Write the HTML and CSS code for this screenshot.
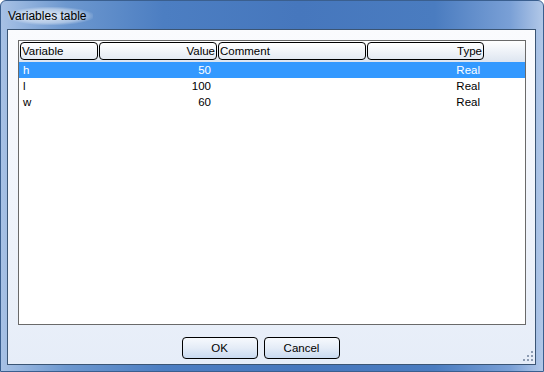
FILE: index.html
```html
<!DOCTYPE html>
<html lang="en">
<head>
  <meta charset="UTF-8" />
  <title>Variables table</title>
  <link rel="stylesheet" href="styles.css">
</head>
<body>
  <div class="window">
    <div class="titlebar">
      <span class="title">Variables table</span>
    </div>

    <div class="client">
      <div class="list">
        <div class="list-header">
          <div class="hcell col-var">Variable</div>
          <div class="hcell col-val right">Value</div>
          <div class="hcell col-com">Comment</div>
          <div class="hcell col-type right">Type</div>
        </div>

        <div class="row selected">
          <div class="cell col-var">h</div>
          <div class="cell col-val right">50</div>
          <div class="cell col-com"></div>
          <div class="cell col-type right">Real</div>
        </div>
        <div class="row">
          <div class="cell col-var">l</div>
          <div class="cell col-val right">100</div>
          <div class="cell col-com"></div>
          <div class="cell col-type right">Real</div>
        </div>
        <div class="row">
          <div class="cell col-var">w</div>
          <div class="cell col-val right">60</div>
          <div class="cell col-com"></div>
          <div class="cell col-type right">Real</div>
        </div>
      </div>

      <div class="buttons">
        <button class="btn">OK</button>
        <button class="btn">Cancel</button>
      </div>

      <!-- size grip in the corner -->
      <svg class="grip" width="12" height="12" viewBox="0 0 12 12">
        <g fill="#8d9cb2">
          <rect x="9" y="1" width="2" height="2" />
          <rect x="5" y="5" width="2" height="2" />
          <rect x="9" y="5" width="2" height="2" />
          <rect x="1" y="9" width="2" height="2" />
          <rect x="5" y="9" width="2" height="2" />
          <rect x="9" y="9" width="2" height="2" />
        </g>
      </svg>
    </div>
  </div>
</body>
</html>
```

FILE: styles.css
```css
body {
  margin: 0;
  background: #ffffff;
  font-family: 'Liberation Sans', Arial, sans-serif;
  font-size: 11.5px;
  color: #000;
}

/* Outer window frame (glass look) */
.window {
  width: 544px;
  height: 372px;
  box-sizing: border-box;
  display: flex;
  flex-direction: column;
  border: 1px solid #3a5f8f;
  border-radius: 6px 6px 0 0;
  background: linear-gradient(90deg, #a7c1e5 0%, #6d98cf 12%, #4c7ec2 30%, #4677bd 55%, #4a7cc0 80%, #7aa0d6 94%, #b2c8e8 100%);
}

.titlebar {
  height: 28px;
  flex: none;
  display: flex;
  align-items: center;
  padding-left: 7px;
  padding-top: 1px;
  box-sizing: border-box;
}

.title {
  font-family: 'Liberation Sans', Arial, sans-serif;
  font-size: 12px;
  color: #000;
  padding: 2px 6px 2px 0;
  background: radial-gradient(ellipse at center, rgba(255,255,255,0.75) 0%, rgba(255,255,255,0.4) 55%, rgba(255,255,255,0) 75%);
}

/* Dialog client area */
.client {
  position: relative;
  flex: 1;
  margin: 0 7px 6px 6px;
  border: 1px solid #3b5574;
  background: linear-gradient(#fafbfe, #e6edf8);
  display: flex;
  flex-direction: column;
}

.list {
  height: 283px;
  margin: 10px 9px 0 10px;
  border: 1px solid #6a6a6a;
  background: #fff;
}

.list-header {
  display: flex;
  gap: 1px;
  padding: 1px 1px 2px 1px;
  background: linear-gradient(#ffffff, #dde5f0);
}

.hcell {
  height: 18px;
  line-height: 17px;
  box-sizing: border-box;
  border: 1px solid #000;
  border-radius: 4px;
  padding: 0 1px;
  background: linear-gradient(#ffffff, #e4eaf3);
  white-space: nowrap;
}

.col-var { width: 78px; }
.col-val { width: 118px; }
.col-com { width: 148px; }
.col-type { width: 117px; }

.right { text-align: right; }

.row {
  display: flex;
  gap: 1px;
  padding: 0 1px;
  height: 16px;
  line-height: 16px;
}

.row.selected {
  background: #3399ff;
  color: #fff;
}

.cell {
  box-sizing: border-box;
  padding: 0 6px 0 3px;
  white-space: nowrap;
}

.cell.col-type { padding-right: 4px; }

.buttons {
  display: flex;
  justify-content: center;
  gap: 6px;
  padding-right: 22px;
  margin-top: 12px;
}

.btn {
  width: 76px;
  height: 22px;
  border: 1px solid #000;
  border-radius: 4px;
  background: linear-gradient(#f6f9fd 0%, #e4ecf7 50%, #c9daf0 100%);
  font-family: 'Liberation Sans', Arial, sans-serif;
  font-size: 11.5px;
  color: #000;
  padding: 0;
}

.grip {
  position: absolute;
  right: 1px;
  bottom: 2px;
}
```
